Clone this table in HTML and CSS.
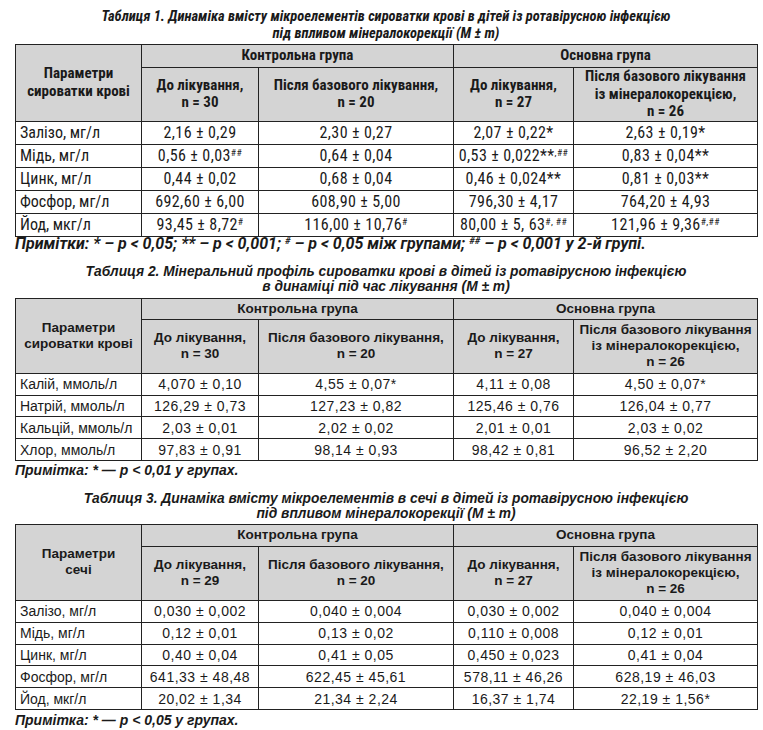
FILE: index.html
```html
<!DOCTYPE html>
<html lang="uk">
<head>
<meta charset="utf-8">
<title>Таблиці</title>
<link rel="stylesheet" href="styles.css">
</head>
<body>
<div class="page">

  <section class="block block-narrow">
    <h2 class="caption">Таблиця 1. Динаміка вмісту мікроелементів сироватки крові в дітей із ротавірусною інфекцією<br>під впливом мінералокорекції (M ± m)</h2>
    <table class="tbl">
      <colgroup><col class="c1"><col class="c2"><col class="c3"><col class="c4"><col class="c5"></colgroup>
      <thead>
        <tr class="grp"><th rowspan="2">Параметри<br>сироватки крові</th><th colspan="2">Контрольна група</th><th colspan="2">Основна група</th></tr>
        <tr class="sub"><th>До лікування,<br>n = 30</th><th>Після базового лікування,<br>n = 20</th><th>До лікування,<br>n = 27</th><th>Після базового лікування<br>із мінералокорекцією,<br>n = 26</th></tr>
      </thead>
      <tbody>
        <tr><td>Залізо, мг/л</td><td>2,16 ± 0,29</td><td>2,30 ± 0,27</td><td>2,07 ± 0,22*</td><td>2,63 ± 0,19*</td></tr>
        <tr><td>Мідь, мг/л</td><td>0,56 ± 0,03<sup>##</sup></td><td>0,64 ± 0,04</td><td>0,53 ± 0,022**<sup>,##</sup></td><td>0,83 ± 0,04**</td></tr>
        <tr><td>Цинк, мг/л</td><td>0,44 ± 0,02</td><td>0,68 ± 0,04</td><td>0,46 ± 0,024**</td><td>0,81 ± 0,03**</td></tr>
        <tr><td>Фосфор, мг/л</td><td>692,60 ± 6,00</td><td>608,90 ± 5,00</td><td>796,30 ± 4,17</td><td>764,20 ± 4,93</td></tr>
        <tr><td>Йод, мкг/л</td><td>93,45 ± 8,72<sup>#</sup></td><td>116,00 ± 10,76<sup>#</sup></td><td>80,00 ± 5, 63<sup>#, ##</sup></td><td>121,96 ± 9,36<sup>#,##</sup></td></tr>
      </tbody>
    </table>
    <p class="note">Примітки: * – p &lt; 0,05; ** – p &lt; 0,001; <sup>#</sup> – p &lt; 0,05 між групами; <sup>##</sup> – p &lt; 0,001 у 2-й групі.</p>
  </section>

  <section class="block block-wide b2">
    <h2 class="caption">Таблиця 2. Мінеральний профіль сироватки крові в дітей із ротавірусною інфекцією<br>в динаміці під час лікування (M ± m)</h2>
    <table class="tbl">
      <colgroup><col class="c1"><col class="c2"><col class="c3"><col class="c4"><col class="c5"></colgroup>
      <thead>
        <tr class="grp"><th rowspan="2">Параметри<br>сироватки крові</th><th colspan="2">Контрольна група</th><th colspan="2">Основна група</th></tr>
        <tr class="sub"><th>До лікування,<br>n = 30</th><th>Після базового лікування,<br>n = 20</th><th>До лікування,<br>n = 27</th><th>Після базового лікування<br>із мінералокорекцією,<br>n = 26</th></tr>
      </thead>
      <tbody>
        <tr><td>Калій, ммоль/л</td><td>4,070 ± 0,10</td><td>4,55 ± 0,07*</td><td>4,11 ± 0,08</td><td>4,50 ± 0,07*</td></tr>
        <tr><td>Натрій, ммоль/л</td><td>126,29 ± 0,73</td><td>127,23 ± 0,82</td><td>125,46 ± 0,76</td><td>126,04 ± 0,77</td></tr>
        <tr><td>Кальцій, ммоль/л</td><td>2,03 ± 0,01</td><td>2,02 ± 0,02</td><td>2,01 ± 0,01</td><td>2,03 ± 0,02</td></tr>
        <tr><td>Хлор, ммоль/л</td><td>97,83 ± 0,91</td><td>98,14 ± 0,93</td><td>98,42 ± 0,81</td><td>96,52 ± 2,20</td></tr>
      </tbody>
    </table>
    <p class="note">Примітка: * — p &lt; 0,01 у групах.</p>
  </section>

  <section class="block block-wide b3">
    <h2 class="caption">Таблиця 3. Динаміка вмісту мікроелементів в сечі в дітей із ротавірусною інфекцією<br>під впливом мінералокорекції (M ± m)</h2>
    <table class="tbl">
      <colgroup><col class="c1"><col class="c2"><col class="c3"><col class="c4"><col class="c5"></colgroup>
      <thead>
        <tr class="grp"><th rowspan="2">Параметри<br>сечі</th><th colspan="2">Контрольна група</th><th colspan="2">Основна група</th></tr>
        <tr class="sub"><th>До лікування,<br>n = 29</th><th>Після базового лікування,<br>n = 20</th><th>До лікування,<br>n = 27</th><th>Після базового лікування<br>із мінералокорекцією,<br>n = 26</th></tr>
      </thead>
      <tbody>
        <tr><td>Залізо, мг/л</td><td>0,030 ± 0,002</td><td>0,040 ± 0,004</td><td>0,030 ± 0,002</td><td>0,040 ± 0,004</td></tr>
        <tr><td>Мідь, мг/л</td><td>0,12 ± 0,01</td><td>0,13 ± 0,02</td><td>0,110 ± 0,008</td><td>0,12 ± 0,01</td></tr>
        <tr><td>Цинк, мг/л</td><td>0,40 ± 0,04</td><td>0,41 ± 0,05</td><td>0,450 ± 0,023</td><td>0,41 ± 0,04</td></tr>
        <tr><td>Фосфор, мг/л</td><td>641,33 ± 48,48</td><td>622,45 ± 45,61</td><td>578,11 ± 46,26</td><td>628,19 ± 46,03</td></tr>
        <tr><td>Йод, мкг/л</td><td>20,02 ± 1,34</td><td>21,34 ± 2,24</td><td>16,37 ± 1,74</td><td>22,19 ± 1,56*</td></tr>
      </tbody>
    </table>
    <p class="note">Примітка: * — p &lt; 0,05 у групах.</p>
  </section>

</div>
</body>
</html>
```

FILE: styles.css
```css
html, body {
  margin: 0;
  padding: 0;
  background: #ffffff;
}

.page {
  width: 763px;
  padding-top: 8px;
  color: #1a1a1a;
}

.block {
  padding-left: 15px;
  width: 742px;
}

.caption {
  margin: 0;
  text-align: center;
  font-weight: bold;
  font-style: italic;
  color: #1a1a1a;
}

.tbl {
  width: 742px;
  border-collapse: collapse;
  table-layout: fixed;
}

.tbl th,
.tbl td {
  border: 1px solid #222222;
  padding: 0;
  text-align: center;
  vertical-align: middle;
  white-space: nowrap;
}

.tbl th {
  background: #d4d4d4;
  font-weight: bold;
}

.tbl td:first-child {
  text-align: left;
  padding-left: 4px;
}

.tbl sup {
  font-size: 0.6em;
  vertical-align: 0.5em;
  line-height: 0;
}

.c1 { width: 126px; }
.c2 { width: 117px; }
.c3 { width: 195px; }
.c4 { width: 120px; }
.c5 { width: 184px; }

.note {
  margin: 0;
  font-weight: bold;
  font-style: italic;
  white-space: nowrap;
}

.note sup {
  font-size: 0.6em;
  vertical-align: 0.5em;
  line-height: 0;
}

/* Table 1: condensed type */
.block-narrow,
.block-narrow .tbl {
  font-family: Roboto, "Liberation Sans", sans-serif;
  font-stretch: 78%;
}

.block-narrow .caption {
  font-size: 14.5px;
  font-stretch: 75%;
  line-height: 17px;
  margin-bottom: 2px;
}

.block-narrow .tbl th {
  font-size: 15px;
  font-stretch: 85%;
  line-height: 17.6px;
  font-weight: 700;
}

.block-narrow .tbl td {
  font-size: 16px;
  font-stretch: 84%;
  font-weight: 400;
}

.block-narrow .tbl td + td {
  letter-spacing: 0.4px;
}

.block-narrow .grp th { height: 22px; }
.block-narrow .sub th { height: 52px; }
.block-narrow tbody td { height: 22px; }

.block-narrow .note {
  font-size: 16px;
  font-stretch: 90%;
  line-height: 14px;
}

/* Tables 2 and 3: wide type */
.block-wide,
.block-wide .tbl {
  font-family: "Liberation Sans", Arial, sans-serif;
}

.b2 { margin-top: 13px; }
.b3 { margin-top: 12px; }

.block-wide .caption {
  font-size: 13.8px;
  line-height: 15px;
  margin-bottom: 4px;
}

.b3 .caption { margin-bottom: 3px; }

.block-wide .tbl th {
  font-size: 13.5px;
  line-height: 16px;
}

.block-wide .tbl td {
  font-size: 14px;
}

.block-wide .tbl td + td {
  letter-spacing: 0.5px;
}

.block-wide .grp th { height: 20px; }
.block-wide .sub th { height: 53px; }
.block-wide tbody td { height: 20.8px; }

.b3 .grp th { height: 21px; }
.b3 .sub th { height: 53px; }
.b3 tbody td { height: 20.8px; }

.block-wide .note {
  font-size: 14px;
  line-height: 18px;
}

.b3 .note { line-height: 20px; }
```
